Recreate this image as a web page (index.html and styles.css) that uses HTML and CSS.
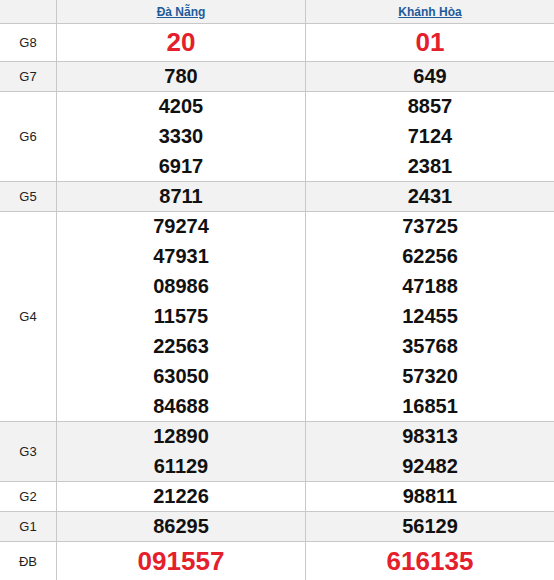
FILE: index.html
```html
<!DOCTYPE html>
<html lang="vi">
<head>
<meta charset="utf-8">
<title>Kết quả xổ số</title>
<link rel="stylesheet" href="styles.css">
</head>
<body>
<div class="results">
  <div class="cell head"></div>
  <div class="cell head"><a href="#">Đà Nẵng</a></div>
  <div class="cell head"><a href="#">Khánh Hòa</a></div>

  <div class="cell label">G8</div>
  <div class="cell nums big"><span>20</span></div>
  <div class="cell nums big"><span>01</span></div>

  <div class="cell label alt">G7</div>
  <div class="cell nums alt"><span>780</span></div>
  <div class="cell nums alt"><span>649</span></div>

  <div class="cell label">G6</div>
  <div class="cell nums"><span>4205</span><span>3330</span><span>6917</span></div>
  <div class="cell nums"><span>8857</span><span>7124</span><span>2381</span></div>

  <div class="cell label alt">G5</div>
  <div class="cell nums alt"><span>8711</span></div>
  <div class="cell nums alt"><span>2431</span></div>

  <div class="cell label">G4</div>
  <div class="cell nums"><span>79274</span><span>47931</span><span>08986</span><span>11575</span><span>22563</span><span>63050</span><span>84688</span></div>
  <div class="cell nums"><span>73725</span><span>62256</span><span>47188</span><span>12455</span><span>35768</span><span>57320</span><span>16851</span></div>

  <div class="cell label alt">G3</div>
  <div class="cell nums alt"><span>12890</span><span>61129</span></div>
  <div class="cell nums alt"><span>98313</span><span>92482</span></div>

  <div class="cell label">G2</div>
  <div class="cell nums"><span>21226</span></div>
  <div class="cell nums"><span>98811</span></div>

  <div class="cell label alt">G1</div>
  <div class="cell nums alt"><span>86295</span></div>
  <div class="cell nums alt"><span>56129</span></div>

  <div class="cell label">ĐB</div>
  <div class="cell nums big"><span>091557</span></div>
  <div class="cell nums big"><span>616135</span></div>
</div>
</body>
</html>
```
FILE: styles.css
```css
html, body {
  margin: 0;
  padding: 0;
  background: #fff;
}
body {
  font-family: "Liberation Sans", Arial, sans-serif;
}
.results {
  display: grid;
  grid-template-columns: 56px 1fr 1fr;
  grid-template-rows: 23px 37px 29px 89px 29px 209px 59px 29px 29px 39px;
  gap: 1px;
  background: #c8c8c8;
  width: 554px;
}
.cell {
  background: #fff;
  display: flex;
  align-items: center;
  justify-content: center;
}
.head, .alt {
  background: #f2f2f2;
}
.head a {
  color: #1f5b9b;
  font-size: 12px;
  font-weight: bold;
  text-decoration: underline;
}
.label {
  font-size: 13px;
  color: #222;
}
.nums {
  flex-direction: column;
  align-items: stretch;
}
.nums span {
  flex: 1;
  display: flex;
  align-items: center;
  justify-content: center;
  font-size: 20px;
  font-weight: bold;
  color: #111;
}
.big span {
  font-size: 26px;
  color: #e3202b;
}
```
